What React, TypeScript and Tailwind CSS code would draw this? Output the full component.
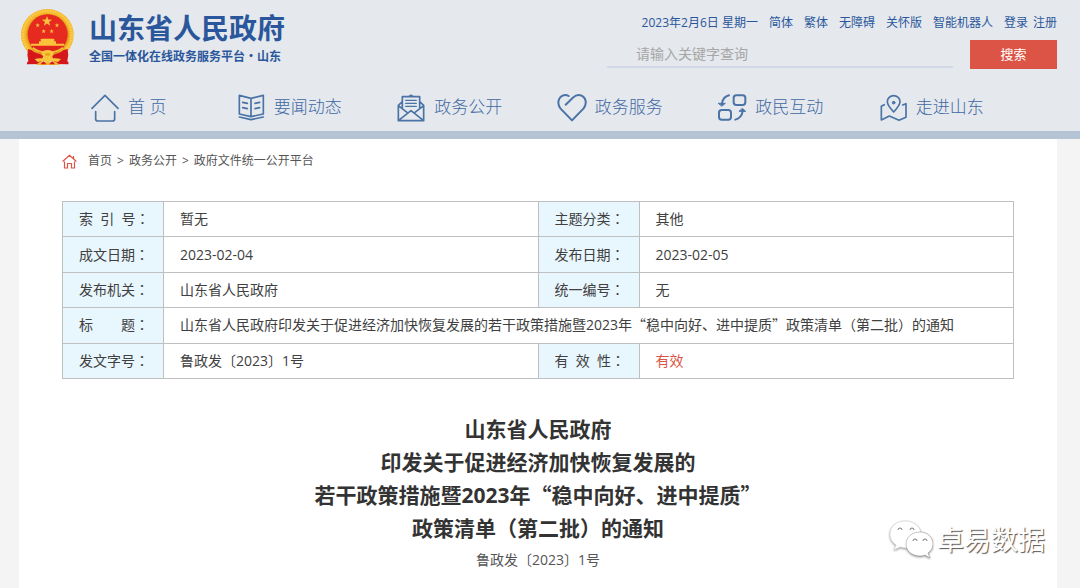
import type { ReactNode } from "react";

const utilityLinks = ["简体", "繁体", "无障碍", "关怀版", "智能机器人"];

function Emblem() {
  const star = (cx: number, cy: number, r: number) =>
    Array.from({ length: 10 }, (_, i) => {
      const a = (Math.PI / 5) * i - Math.PI / 2;
      const d = i % 2 ? r * 0.4 : r;
      return `${cx + d * Math.cos(a)},${cy + d * Math.sin(a)}`;
    }).join(" ");
  return (
    <svg viewBox="60 24 165 174" className="h-[58px] w-[55px] shrink-0" aria-hidden="true">
      <ellipse cx="142" cy="104" rx="79" ry="77" fill="#f3b52c" />
      <ellipse cx="142" cy="104" rx="73" ry="71" fill="none" stroke="#fbcb45" strokeWidth="8" strokeDasharray="6 2" />
      <ellipse cx="143" cy="104" rx="64" ry="62" fill="#e39a1c" />
      <ellipse cx="143" cy="103" rx="60" ry="60" fill="#e72a20" />
      <g fill="#fbc23c">
        <polygon points={star(141, 64, 16)} />
        <polygon points={star(113, 76, 7)} />
        <polygon points={star(171, 76, 7)} />
        <polygon points={star(131, 94, 7)} />
        <polygon points={star(155, 94, 7)} />
        <path d="M124 116H161L165 121H162V124H168V131H192L194 137H91L94 131H117V124H123V121H120Z" />
      </g>
      <path d="M93 139H193Q185 158 143 163Q100 158 93 139Z" fill="#dd241d" />
      <path d="M84 147Q95 148 104 157L130 166L122 192L81 193Q79 189 85 183Q80 166 84 147Z" fill="#d5161b" />
      <path d="M203 147Q190 148 181 157L156 166L164 192L205 193Q208 189 202 183Q207 166 203 147Z" fill="#d5161b" />
      <path d="M98 143Q115 157 143 158Q171 157 189 143" fill="none" stroke="#f6bd32" strokeWidth="6" />
      <ellipse cx="143" cy="161" rx="18" ry="11" fill="#f8c63c" />
      <ellipse cx="143" cy="163" rx="8" ry="5" fill="#e8a321" />
      <path d="M104 177Q122 172 143 178Q164 172 183 177L174 186Q158 181 143 186Q128 181 113 186Z" fill="#f8c63c" />
      <path d="M107 195L120 185H167L180 195Z" fill="#f3b52c" />
      <path d="M122 193L130 184L140 193ZM165 193L157 184L147 193Z" fill="#d5161b" />
    </svg>
  );
}

function NavIcon({ viewBox, children }: { viewBox: string; children: ReactNode }) {
  return (
    <svg
      viewBox={viewBox}
      className="size-[30px] shrink-0"
      fill="none"
      stroke="#4a73a6"
      strokeWidth="5"
      strokeLinecap="round"
      strokeLinejoin="round"
      aria-hidden="true"
    >
      {children}
    </svg>
  );
}

const navItems = [
  {
    label: "首 页",
    icon: (
      <NavIcon viewBox="26 38 90 90">
        <path d="M32 84L71 45L110 84M43 94V116Q43 122 49 122H94Q100 122 100 116V94" />
      </NavIcon>
    ),
  },
  {
    label: "要闻动态",
    icon: (
      <NavIcon viewBox="470 38 90 90">
        <path d="M515 54L480 45V101L515 109L552 101V45L515 54V109M480 110L515 118L552 110" />
        <path d="M490 66L504 69M490 82L504 85M527 69L541 66M527 85L541 82" />
      </NavIcon>
    ),
  },
  {
    label: "政务公开",
    icon: (
      <NavIcon viewBox="52 38 90 90">
        <path d="M71 64L59 75V121H135V75L123 64M71 82V49H123V82M59 76L86 97M135 76L108 97M60 120L97 91L134 120" />
        <path d="M81 60H113M81 69H113M81 78H113M92 47L97 44L102 47" strokeWidth="4" />
      </NavIcon>
    ),
  },
  {
    label: "政务服务",
    icon: (
      <NavIcon viewBox="532 38 90 90">
        <path
          d="M558 73L581 51Q592 40 606 46C620 53 622 70 612 84L577 120L542 84C532 71 535 52 549 46Q558 42 567 47"
          strokeWidth="6"
        />
      </NavIcon>
    ),
  },
  {
    label: "政民互动",
    icon: (
      <NavIcon viewBox="52 38 90 90">
        <g strokeWidth="6">
          <rect x="102" y="45" width="35" height="29" rx="8" />
          <rect x="58" y="89" width="36" height="29" rx="8" />
          <path d="M88 45Q70 50 67 69M107 118Q126 112 129 93" />
        </g>
        <path d="M57 69H77L67 77ZM119 93H138L129 85Z" fill="#4a73a6" strokeWidth="3" />
      </NavIcon>
    ),
  },
  {
    label: "走进山东",
    icon: (
      <NavIcon viewBox="532 38 90 90">
        <path d="M579 95Q560 74 560 64A19 18 0 0 1 598 64Q598 74 579 95Z" />
        <circle cx="579" cy="67" r="4" fill="#4a73a6" strokeWidth="3" />
        <path d="M551 73L542 78V119L566 107L595 120L616 111V70L606 74" />
      </NavIcon>
    ),
  },
];

function LabelCell({ children }: { children: ReactNode }) {
  return (
    <th scope="row" className="border border-[#bfbfbf] bg-[#e8f6fd] pl-4 text-left font-normal whitespace-nowrap">
      {children}
      <span lang="zh-TW" className="font-['Noto_Sans_CJK_TC',sans-serif] leading-none">
        ：
      </span>
    </th>
  );
}

function ValueCell({ children, colSpan }: { children: ReactNode; colSpan?: number }) {
  return (
    <td colSpan={colSpan} className="border border-[#bfbfbf] px-4">
      {children}
    </td>
  );
}

function Quoted({ children }: { children: ReactNode }) {
  return (
    <>
      <span className="font-['Noto_Sans_CJK_SC',sans-serif] leading-none">“</span>
      {children}
      <span className="font-['Noto_Sans_CJK_SC',sans-serif] leading-none">”</span>
    </>
  );
}

function Watermark() {
  return (
    <div className="absolute right-[35px] bottom-[28px] flex items-center gap-1 text-white">
      <svg
        viewBox="0 0 44 40"
        className="h-10 w-11 drop-shadow-[0px_1px_1px_#999999]"
        fill="#ffffff"
        stroke="#cccccc"
        strokeWidth="0.5"
        aria-hidden="true"
      >
        <path d="M16 1C7 1 1 7 1 14C1 19 3 22 7 25L5 30L11 27Q14 28 18 28C27 28 32 22 32 14C32 7 25 1 16 1Z" />
        <path
          d="M31 12C23 12 17 17 17 24C17 31 23 36 31 36Q34 36 36 35L41 38L39 33C42 31 44 28 44 24C44 17 38 12 31 12Z"
          stroke="#888888"
        />
        <g fill="none" stroke="#777777" strokeWidth="1">
          <path d="M9 10A2 2 0 0 1 13 10M21 10A2 2 0 0 1 25 10M24 21A2 2 0 0 1 28 21M34 21A2 2 0 0 1 38 21" />
        </g>
      </svg>
      <span className="text-[27px] leading-10 [text-shadow:1px_1px_1px_#555555]">卓易数据</span>
    </div>
  );
}

export default function App() {
  return (
    <div
      lang="zh-CN"
      className="relative flex min-h-screen flex-col bg-[#f4f4f4] font-['Open_Sans','Noto_Sans_CJK_SC',sans-serif] text-sm text-[#404040]"
    >
      <header className="border-b-8 border-[#b5c4d5] bg-[#e5e8ed] text-[#2a579b]">
        <div className="flex h-[84px] items-start justify-between pr-[23px] pl-5">
          <a href="#" className="flex items-start gap-[14px] pt-2">
            <Emblem />
            <span className="flex flex-col font-['Noto_Sans_CJK_SC',sans-serif] font-bold">
              <span className="text-[28px] leading-[38px]">山东省人民政府</span>
              <span className="text-xs leading-5">全国一体化在线政务服务平台·山东</span>
            </span>
          </a>
          <div className="flex w-[450px] flex-col items-end">
            <div className="flex h-10 items-center gap-[11px] pt-[6px] text-xs whitespace-nowrap">
              <span>2023年2月6日 星期一</span>
              {utilityLinks.map((t) => (
                <a key={t} href="#">
                  {t}
                </a>
              ))}
              <span className="flex gap-[5px]">
                <a href="#">登录</a>
                <a href="#">注册</a>
              </span>
            </div>
            <form className="flex w-full gap-[17px]" onSubmit={(e) => e.preventDefault()}>
              <input
                type="search"
                aria-label="请输入关键字查询"
                placeholder="请输入关键字查询"
                className="h-7 min-w-0 flex-1 border-b-2 border-[#d0d9e5] bg-transparent pl-[29px] text-sm outline-none placeholder:text-[#a6a6a6]"
              />
              <button type="submit" className="h-[29px] w-[87px] bg-[#dc5445] text-[13px] text-white">
                搜索
              </button>
            </form>
          </div>
        </div>
        <nav className="grid h-[47px] grid-cols-6 pr-[69px] pl-[48px]">
          {navItems.map(({ label, icon }) => (
            <a
              key={label}
              href="#"
              className="flex items-center justify-center gap-2 text-[17px] font-light whitespace-nowrap text-[#3f69a3]"
            >
              {icon}
              {label}
            </a>
          ))}
        </nav>
      </header>

      <main className="mr-[23px] ml-[19px] flex-1 bg-white px-[43px]">
        <nav className="flex h-11 items-center gap-[11px] text-xs text-[#555555]" aria-label="面包屑">
          <svg viewBox="0 0 15 15" className="size-[15px]" fill="none" stroke="#dc5445" strokeWidth="1.2" aria-hidden="true">
            <path d="M0.6 7.5L7.5 1.2L14.4 7.5M11.5 2V4.5M2.5 7.5V14H5.5V9.5H9.5V14H12.5V7.5" />
          </svg>
          <span className="flex gap-[5px]">
            <a href="#">首页</a>
            <span>&gt;</span>
            <a href="#">政务公开</a>
            <span>&gt;</span>
            <a href="#">政府文件统一公开平台</a>
          </span>
        </nav>

        <table className="mt-[18px] h-[178px] w-full table-fixed border-collapse">
          <colgroup>
            <col className="w-[101px]" />
            <col />
            <col className="w-[101px]" />
            <col />
          </colgroup>
          <tbody>
            <tr>
              <LabelCell>索&nbsp;&nbsp;引&nbsp;&nbsp;号</LabelCell>
              <ValueCell>暂无</ValueCell>
              <LabelCell>主题分类</LabelCell>
              <ValueCell>其他</ValueCell>
            </tr>
            <tr>
              <LabelCell>成文日期</LabelCell>
              <ValueCell>2023-02-04</ValueCell>
              <LabelCell>发布日期</LabelCell>
              <ValueCell>2023-02-05</ValueCell>
            </tr>
            <tr>
              <LabelCell>发布机关</LabelCell>
              <ValueCell>山东省人民政府</ValueCell>
              <LabelCell>统一编号</LabelCell>
              <ValueCell>无</ValueCell>
            </tr>
            <tr>
              <LabelCell>标　　题</LabelCell>
              <ValueCell colSpan={3}>
                山东省人民政府印发关于促进经济加快恢复发展的若干政策措施暨2023年<Quoted>稳中向好、进中提质</Quoted>
                政策清单（第二批）的通知
              </ValueCell>
            </tr>
            <tr>
              <LabelCell>发文字号</LabelCell>
              <ValueCell>鲁政发〔2023〕1号</ValueCell>
              <LabelCell>有&nbsp;&nbsp;效&nbsp;&nbsp;性</LabelCell>
              <ValueCell>
                <span className="text-[#dc5445]">有效</span>
              </ValueCell>
            </tr>
          </tbody>
        </table>

        <article className="pt-[34px] text-center">
          <h1 className="text-[21px] leading-[33px] font-bold text-[#333333]">
            山东省人民政府
            <br />
            印发关于促进经济加快恢复发展的
            <br />
            若干政策措施暨2023年<Quoted>稳中向好、进中提质</Quoted>
            <br />
            政策清单（第二批）的通知
          </h1>
          <p className="leading-[30px] text-[#555555]">鲁政发〔2023〕1号</p>
        </article>
      </main>
      <Watermark />
    </div>
  );
}
